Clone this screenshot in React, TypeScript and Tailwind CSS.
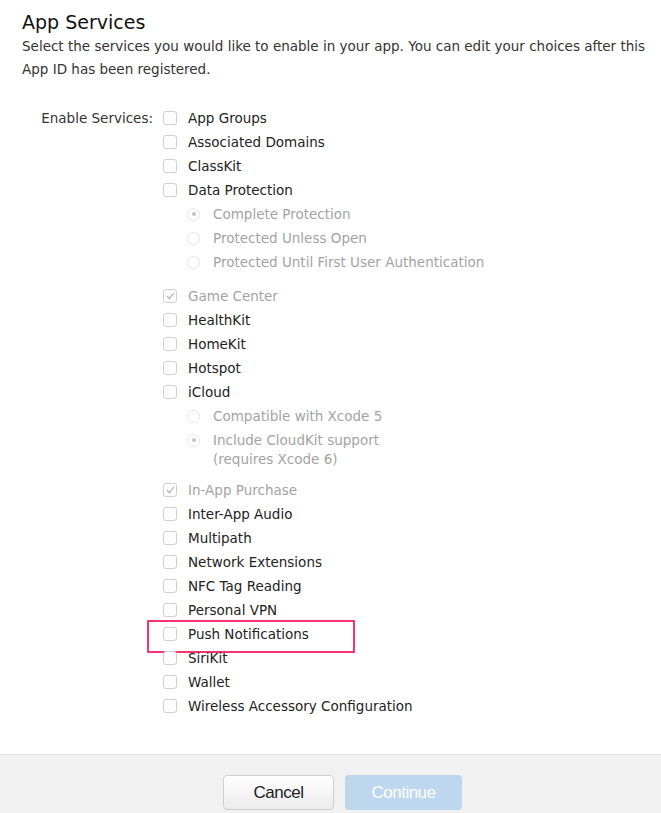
import React from 'react';

type Item = {
  label: string;
  kind?: 'check' | 'radio';
  checked?: boolean;
  disabled?: boolean;
  sub?: string;
  gapBefore?: boolean;
  highlight?: boolean;
};

const items: Item[] = [
  { label: 'App Groups' },
  { label: 'Associated Domains' },
  { label: 'ClassKit' },
  { label: 'Data Protection' },
  { label: 'Complete Protection', kind: 'radio', checked: true, disabled: true },
  { label: 'Protected Unless Open', kind: 'radio', disabled: true },
  { label: 'Protected Until First User Authentication', kind: 'radio', disabled: true },
  { label: 'Game Center', checked: true, disabled: true, gapBefore: true },
  { label: 'HealthKit' },
  { label: 'HomeKit' },
  { label: 'Hotspot' },
  { label: 'iCloud' },
  { label: 'Compatible with Xcode 5', kind: 'radio', disabled: true },
  { label: 'Include CloudKit support', kind: 'radio', checked: true, disabled: true, sub: '(requires Xcode 6)' },
  { label: 'In-App Purchase', checked: true, disabled: true, gapBefore: true },
  { label: 'Inter-App Audio' },
  { label: 'Multipath' },
  { label: 'Network Extensions' },
  { label: 'NFC Tag Reading' },
  { label: 'Personal VPN' },
  { label: 'Push Notifications', highlight: true },
  { label: 'SiriKit' },
  { label: 'Wallet' },
  { label: 'Wireless Accessory Configuration' },
];

const Checkbox = ({ checked }: { checked?: boolean }) => (
  <span className="w-[14px] h-[14px] rounded-[3px] border border-[#cfcfcf] bg-white flex items-center justify-center shrink-0">
    {checked && (
      <svg width="9" height="8" viewBox="0 0 9 8">
        <path d="M1 4.2 L3.4 6.6 L8 1" fill="none" stroke="#a8a8a8" strokeWidth="1.1" />
      </svg>
    )}
  </span>
);

const Radio = ({ checked }: { checked?: boolean }) => (
  <span className="w-[13px] h-[13px] rounded-full border border-[#e4e4e4] bg-white flex items-center justify-center shrink-0">
    {checked && <span className="w-[4px] h-[4px] rounded-full bg-[#c4c4c4]" />}
  </span>
);

const Row = ({ item }: { item: Item }) => {
  const isRadio = item.kind === 'radio';
  const textColor = item.disabled ? 'text-[#a3a3a3]' : 'text-[#222]';
  return (
    <div className={`relative ${item.gapBefore ? 'mt-[10px]' : ''} ${isRadio ? 'pl-[24px]' : ''}`}>
      {item.highlight && (
        <div className="absolute left-[-16px] top-[-2px] w-[208px] h-[33px] border-2 border-[#f5336e] rounded-[1px]" />
      )}
      <div className="flex items-start h-[24px]">
        <div className="h-[24px] flex items-center">
          {isRadio ? <Radio checked={item.checked} /> : <Checkbox checked={item.checked} />}
        </div>
        <span className={`${isRadio ? 'ml-[13px]' : 'ml-[11px]'} leading-[24px] ${textColor}`}>{item.label}</span>
      </div>
      {item.sub && (
        <div className={`pl-[26px] leading-[18px] -mt-[2px] ${textColor}`}>{item.sub}</div>
      )}
    </div>
  );
};

export default function App() {
  return (
    <div className="w-[661px] h-[813px] bg-white flex flex-col" style={{ fontFamily: '"DejaVu Sans", sans-serif' }}>
      <div className="flex-1 pl-[22px] pr-[4px] pt-[10px]">
        <h1 className="text-[19px] leading-[24px] text-[#111]">App Services</h1>
        <p className="text-[13.5px] leading-[23px] text-[#333] mt-[1px]">
          Select the services you would like to enable in your app. You can edit your choices after this App ID has been registered.
        </p>
        <div className="flex mt-[25px] text-[13.5px]">
          <div className="w-[131px] text-right leading-[24px] text-[#333]">Enable Services:</div>
          <div className="ml-[10px] flex flex-col">
            {items.map((it) => (
              <Row key={it.label} item={it} />
            ))}
          </div>
        </div>
      </div>
      <div className="h-[59px] border-t border-[#e0e0e0] bg-[#f1f1f1] flex justify-center items-start pt-[20px] pl-[24px] gap-[11px]" style={{ fontFamily: '"Liberation Sans", Arial, sans-serif' }}>
        <button className="w-[111px] h-[35px] rounded-[4px] border border-[#cfcfcf] bg-gradient-to-b from-white to-[#ececec] text-[#222] text-[17px] tracking-[-0.5px]">
          Cancel
        </button>
        <button className="w-[117px] h-[35px] rounded-[4px] bg-[#bcd7ee] text-white text-[17px] tracking-[-0.5px]">
          Continue
        </button>
      </div>
    </div>
  );
}
